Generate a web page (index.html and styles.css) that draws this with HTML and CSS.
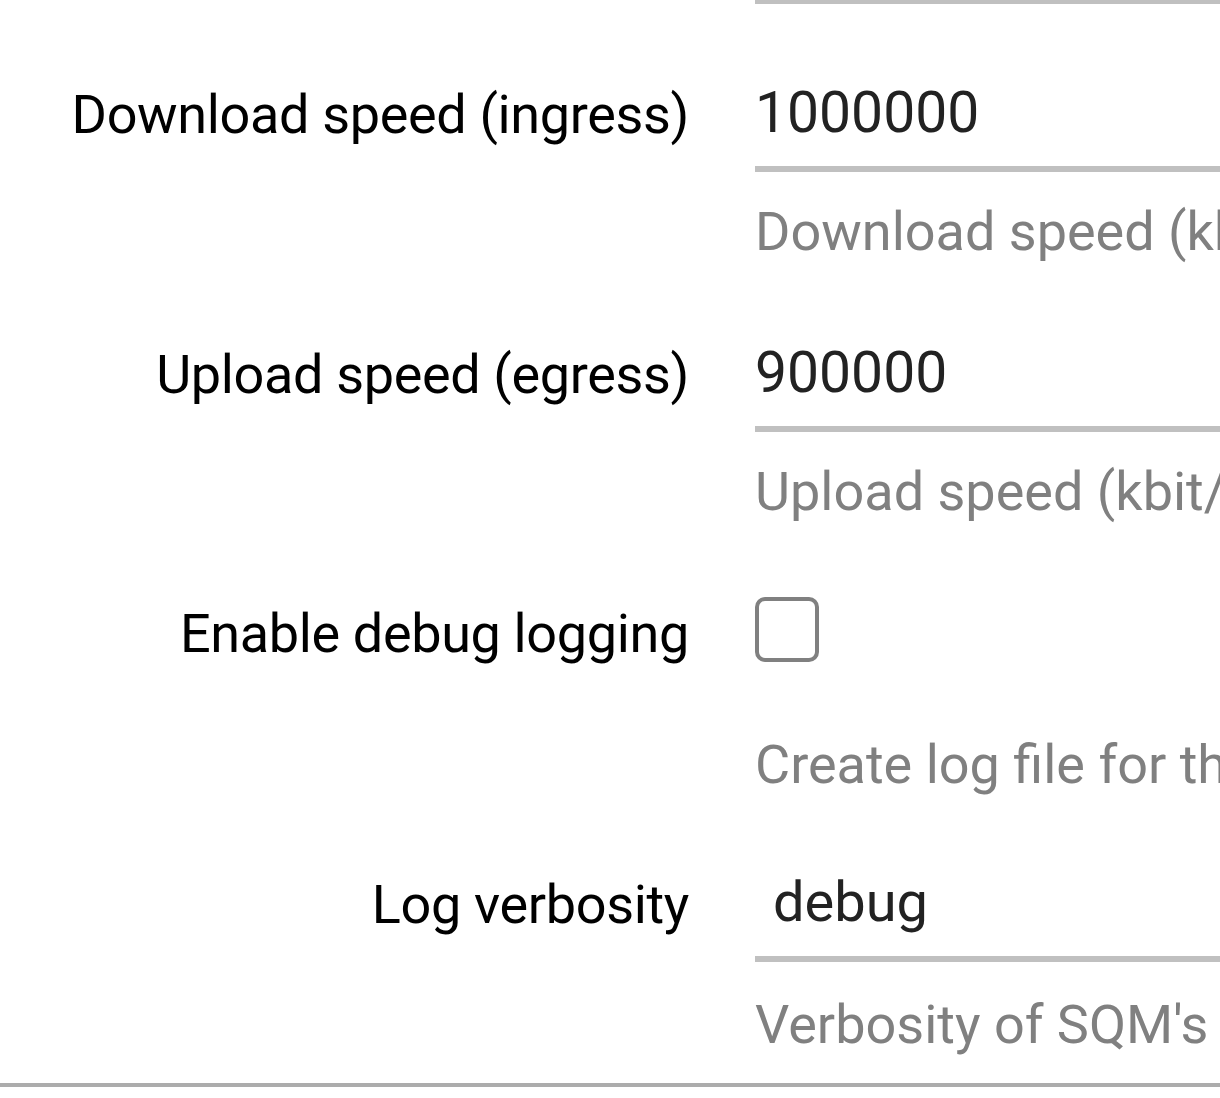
FILE: index.html
```html
<!DOCTYPE html>
<html lang="en">
<head>
  <meta charset="UTF-8">
  <title>SQM QoS - Basic Settings</title>
  <link rel="stylesheet" href="styles.css">
</head>
<body>
  <div class="section">
    <div class="field-tail"></div>

    <div class="row">
      <label class="title" for="download">Download speed (ingress)</label>
      <div class="field">
        <input type="text" id="download" class="text-input" value="1000000">
        <div class="desc">Download speed (kbit/s) (ingress) set to 0 to selectively disable ingress shaping:</div>
      </div>
    </div>

    <div class="row">
      <label class="title" for="upload">Upload speed (egress)</label>
      <div class="field">
        <input type="text" id="upload" class="text-input" value="900000">
        <div class="desc">Upload speed (kbit/s) (egress) set to 0 to selectively disable egress shaping:</div>
      </div>
    </div>

    <div class="row row-check">
      <label class="title" for="debug_logging">Enable debug logging</label>
      <div class="field">
        <input type="checkbox" id="debug_logging" class="check">
        <div class="desc">Create log file for this SQM instance under /var/run/sqm/${Interface_name}.[debug.]log. Make sure to delete log files manually.</div>
      </div>
    </div>

    <div class="row row-select">
      <label class="title" for="verbosity">Log verbosity</label>
      <div class="field">
        <select id="verbosity" class="select-input">
          <option>silent</option>
          <option>error</option>
          <option>warning</option>
          <option>info (default)</option>
          <option selected>debug</option>
          <option>trace</option>
        </select>
        <div class="desc">Verbosity of SQM's output into the system log.</div>
      </div>
    </div>
  </div>
</body>
</html>
```

FILE: styles.css
```css
html, body {
  margin: 0;
  padding: 0;
  overflow: hidden;
  background: #fff;
}

body {
  font-family: Roboto, "Noto Sans", sans-serif;
  font-size: 54px;
  line-height: 64px;
  color: #000;
}

.section {
  padding-bottom: 26px;
  border-bottom: 4px solid #acacac;
  box-shadow: 0 6px 8px -4px rgba(0, 0, 0, 0.18);
}

.field-tail {
  margin-left: 755px;
  height: 4px;
  background: #c0c0c0;
}

.row {
  display: flex;
  padding-top: 68px;
}

.title {
  flex: 0 0 689px;
  text-align: right;
  padding-top: 11px;
  white-space: nowrap;
  letter-spacing: -0.35px;
}

.row-check .title {
  padding-top: 10px;
}

.row-select .title {
  padding-top: 8px;
}

.field {
  flex: 1;
  min-width: 0;
  margin-left: 66px;
  overflow: hidden;
}

.text-input, .select-input {
  display: block;
  width: 100%;
  box-sizing: border-box;
  margin: 0;
  padding: 8px 0 22px 0;
  border: none;
  border-bottom: 6px solid #c0c0c0;
  border-radius: 0;
  background: transparent;
  font-family: inherit;
  font-size: 57px;
  line-height: 64px;
  height: 100px;
  color: #222;
  outline: none;
}

.select-input {
  -webkit-appearance: none;
  appearance: none;
  padding: 5px 0 22px 18px;
  height: 97px;
  font-size: 56px;
}

.check {
  -webkit-appearance: none;
  appearance: none;
  display: block;
  width: 64px;
  height: 65px;
  margin: 5px 0 0 0;
  box-sizing: border-box;
  border: 4px solid #808080;
  border-radius: 10px;
  background: #fff;
}

.desc {
  margin-top: 28px;
  color: #808080;
  white-space: nowrap;
}

.row-check .desc {
  margin-top: 71px;
}

.row-select .desc {
  margin-top: 31px;
}
```
